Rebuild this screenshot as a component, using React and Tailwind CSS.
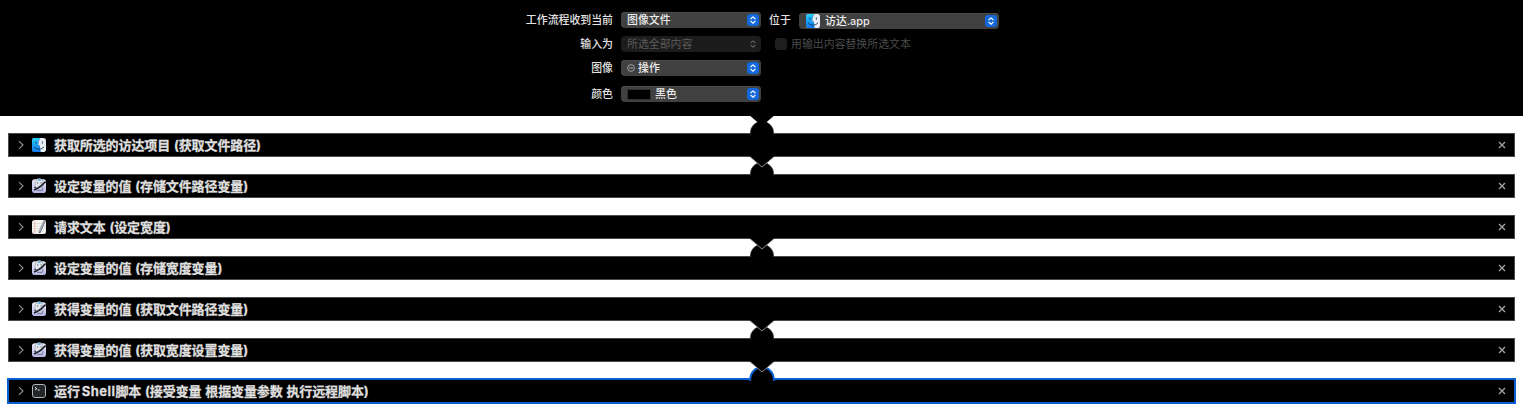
import React from "react";

function FinderIcon() {
  return (
    <svg viewBox="0 0 14 14" className="block h-[14px] w-[14px] shrink-0">
      <defs>
        <linearGradient id="finderBlue" x1="0" y1="0" x2="0" y2="1">
          <stop offset="0" stopColor="#25d0fc" />
          <stop offset="1" stopColor="#1173ee" />
        </linearGradient>
        <clipPath id="finderClip">
          <rect width="14" height="14" rx="2.8" />
        </clipPath>
      </defs>
      <g clipPath="url(#finderClip)">
        <rect width="14" height="14" fill="#e9eef5" />
        <path d="M0 0H8C6.7 2.3 6.2 4.8 6.1 7.7H8C8 10 8.2 12 8.8 14H0Z" fill="url(#finderBlue)" />
        <path d="M8 0C6.7 2.3 6.2 4.8 6.1 7.7H8" fill="none" stroke="#1b4a78" strokeWidth=".35" />
        <path d="M3.8 3.8V5.3M10.4 3.8V5.3" stroke="#123556" strokeWidth=".8" strokeLinecap="round" />
        <path d="M2.4 9.2C4.8 11.8 9.2 11.8 11.7 9.2" fill="none" stroke="#123556" strokeWidth=".9" strokeLinecap="round" />
      </g>
    </svg>
  );
}

function AutomatorIcon() {
  return (
    <svg viewBox="0 0 14 14" className="block h-[14px] w-[14px] shrink-0 overflow-visible">
      <defs>
        <linearGradient id="autoBg" x1="0" y1="0" x2="0" y2="1">
          <stop offset="0" stopColor="#eceef8" />
          <stop offset="1" stopColor="#b4b5e2" />
        </linearGradient>
      </defs>
      <rect y=".3" width="14" height="13.7" rx="2.8" fill="url(#autoBg)" />
      <path d="M3 4.3C3.3 1.2 5-.5 7.2-.6 9.4-.5 11 1.2 11.4 4L10.5 7.4 5 9.2 3.2 7Z" fill="#e2e6ec" stroke="#7d8492" strokeWidth=".5" />
      <ellipse cx="7.4" cy="1" rx="1.9" ry=".8" fill="#3b9edf" />
      <circle cx="5.6" cy="3.9" r=".6" fill="#59606e" />
      <circle cx="9.1" cy="3.9" r=".6" fill="#59606e" />
      <path d="M3.4 9.4L5.6 11.4H10.4L11 8.4" fill="none" stroke="#6d7383" strokeWidth=".9" />
      <path d="M2 11L5.4 9.4 8.9 7 13.6 2.6" fill="none" stroke="#1d2027" strokeWidth="1.6" />
      <path d="M2.4 8L4.6 9.6" stroke="#363a45" strokeWidth="1.2" />
    </svg>
  );
}

function NoteIcon() {
  return (
    <svg viewBox="0 0 14 14" className="block h-[14px] w-[14px] shrink-0">
      <rect width="14" height="14" rx="2.5" fill="#f7f6f3" />
      <path d="M0 3.5H14M0 6H14M0 8.5H14M0 11H14" stroke="#d0d0ce" strokeWidth=".6" />
      <path d="M2.8 0V14" stroke="#efa9a4" strokeWidth=".8" />
      <path d="M13 0L7.2 13" stroke="#65717c" strokeWidth="2.1" />
      <path d="M12.7 .2L7.4 12" stroke="#aebac6" strokeWidth="1" />
    </svg>
  );
}

function TerminalIcon() {
  return (
    <svg viewBox="0 0 14 14" className="block h-[14px] w-[14px] shrink-0">
      <rect x=".5" y=".5" width="13" height="13" rx="2.4" fill="#242628" stroke="#aeb8b8" strokeWidth="1" />
      <path d="M3 3.3L5 4.6 3 5.8M5.6 6H7.8" fill="none" stroke="#f2f2f2" strokeWidth=".9" />
    </svg>
  );
}

const icons = { finder: FinderIcon, automator: AutomatorIcon, note: NoteIcon, terminal: TerminalIcon };

function Stepper({ disabled }) {
  return (
    <span className={"ml-auto flex h-3 w-3 shrink-0 items-center justify-center rounded-[3px] " + (disabled ? "" : "bg-[#1468da]")}>
      <svg viewBox="0 0 12 12" className="h-3 w-3">
        <path d="M3.9 4.8L6 2.9 8.1 4.8M3.9 7.3L6 9.2 8.1 7.3" fill="none" stroke={disabled ? "#5b5b5b" : "#f4f8ff"} strokeWidth="1.2" strokeLinecap="round" strokeLinejoin="round" />
      </svg>
    </span>
  );
}

function Popup({ wide, disabled, children }) {
  return (
    <div className={"flex h-4 items-center rounded-[4px] pr-[2px] " + (wide ? "w-[200px] pl-[7px] " : "w-[140px] pl-[6px] ") + (disabled ? "bg-[#1c1c1c] text-[#5b5b5b]" : "bg-[#404040] font-medium text-[#ececec] shadow-[inset_0_1px_0_#4c4c4c]")}>
      {children}
      <Stepper disabled={disabled} />
    </div>
  );
}

function Label({ children }) {
  return <div className="w-[613px] text-right font-medium text-[#e4e4e4]">{children}</div>;
}

function Header() {
  return (
    <header className="h-[116px] bg-black pt-3 text-[10.9px] leading-4">
      <div className="flex h-6 items-start">
        <Label>工作流程收到当前</Label>
        <div className="ml-2"><Popup>图像文件</Popup></div>
        <span className="ml-2 w-[30px] font-medium text-[#e4e4e4]">位于</span>
        <div className="pt-px">
          <Popup wide>
            <FinderIcon />
            <span className="ml-[5px]">访达.app</span>
          </Popup>
        </div>
      </div>
      <div className="flex h-6 items-start">
        <Label>输入为</Label>
        <div className="ml-2"><Popup disabled>所选全部内容</Popup></div>
        <span className="mt-[2px] ml-[14px] h-3 w-3 rounded-[3px] bg-[#1e1e1e]" />
        <span className="ml-1 text-[#4b4b4b]">用输出内容替换所选文本</span>
      </div>
      <div className="flex h-[26px] items-start">
        <Label>图像</Label>
        <div className="ml-2">
          <Popup>
            <svg viewBox="0 0 8 8" className="mr-[3px] h-2 w-2">
              <circle cx="4" cy="4" r="3.4" fill="none" stroke="#c4c4c4" strokeWidth=".7" />
              <path d="M2 4H6" stroke="#c4c4c4" strokeWidth=".8" />
            </svg>
            操作
          </Popup>
        </div>
      </div>
      <div className="flex items-start">
        <Label>颜色</Label>
        <div className="ml-2">
          <Popup>
            <span className="mr-1 h-[11px] w-6 border border-[#303030] bg-black" />
            黑色
          </Popup>
        </div>
      </div>
    </header>
  );
}

function Socket({ selected }) {
  return (
    <svg viewBox="0 0 27 20" className="pointer-events-none absolute bottom-[22px] left-1/2 h-5 w-[27px] -translate-x-1/2">
      <path
        d="M1.8 19V18A11.7 11.7 0 0 1 25.2 18V19Z"
        fill="#000"
        stroke={selected ? "#0a60d0" : "#4a4a4a"}
        strokeWidth={selected ? 2 : 0.6}
      />
      <rect x="2.6" y="17" width="21.8" height="3" fill="#000" />
    </svg>
  );
}

function Tip({ plain }) {
  return (
    <svg viewBox="0 0 25 12" className="pointer-events-none absolute top-full left-1/2 z-10 -mt-px h-3 w-[25px] -translate-x-1/2">
      <path d="M0 0L.8 1 12.5 11 24.2 1 25 0Z" fill="#000" />
      {!plain && <path d="M.8 1L12.5 11 24.2 1" fill="none" stroke="#999" strokeWidth=".9" />}
    </svg>
  );
}

const actions = [
  { icon: "finder", title: "获取所选的访达项目 (获取文件路径)", socket: true, tip: true },
  { icon: "automator", title: "设定变量的值 (存储文件路径变量)", socket: true },
  { icon: "note", title: "请求文本 (设定宽度)", tip: true },
  { icon: "automator", title: "设定变量的值 (存储宽度变量)", socket: true },
  { icon: "automator", title: "获得变量的值 (获取文件路径变量)", tip: true },
  { icon: "automator", title: "获得变量的值 (获取宽度设置变量)", socket: true, tip: true },
  {
    icon: "terminal",
    title: (
      <>
        运行<span className="ml-[2px] tracking-[0.45px]">Shell</span>脚本 (接受变量 根据变量参数 执行远程脚本)
      </>
    ),
    socket: true,
    selected: true,
  },
];

function Action({ action }) {
  const Icon = icons[action.icon];
  return (
    <section className={"relative flex h-6 items-center bg-black " + (action.selected ? "outline-2 -outline-offset-1 outline-[#0a60d0]" : "")}>
      {!action.selected && <div className="absolute inset-0 border border-[#4a4a4a]" />}
      {action.socket && <Socket selected={action.selected} />}
      {action.tip && <Tip />}
      <svg viewBox="0 0 6 10" className="ml-[9.5px] mt-[-1px] h-[10px] w-[6px]">
        <path d="M1 1.2L5 5 1 8.8" fill="none" stroke="#919191" strokeWidth="1.1" />
      </svg>
      <div className="ml-[8.5px]"><Icon /></div>
      <h2 className="ml-2 text-[13px] leading-4 font-bold tracking-[-0.1px] [word-spacing:0.8px] whitespace-pre text-[#dedede] [-webkit-text-stroke:0.3px_#dedede]">{action.title}</h2>
      <svg viewBox="0 0 8 8" className="mr-[9px] ml-auto h-2 w-2">
        <path d="M1 1L7 7M7 1L1 7" stroke="#a5a5a5" strokeWidth="1.3" />
      </svg>
    </section>
  );
}

export default function App() {
  return (
    <main className="h-[415px] overflow-hidden bg-white font-['Inter','Noto_Sans_CJK_SC',sans-serif]">
      <div className="relative">
        <Header />
        <Tip plain />
      </div>
      <div className="flex flex-col gap-[17px] px-2 pt-[17px]">
        {actions.map((action, i) => <Action key={i} action={action} />)}
      </div>
    </main>
  );
}
